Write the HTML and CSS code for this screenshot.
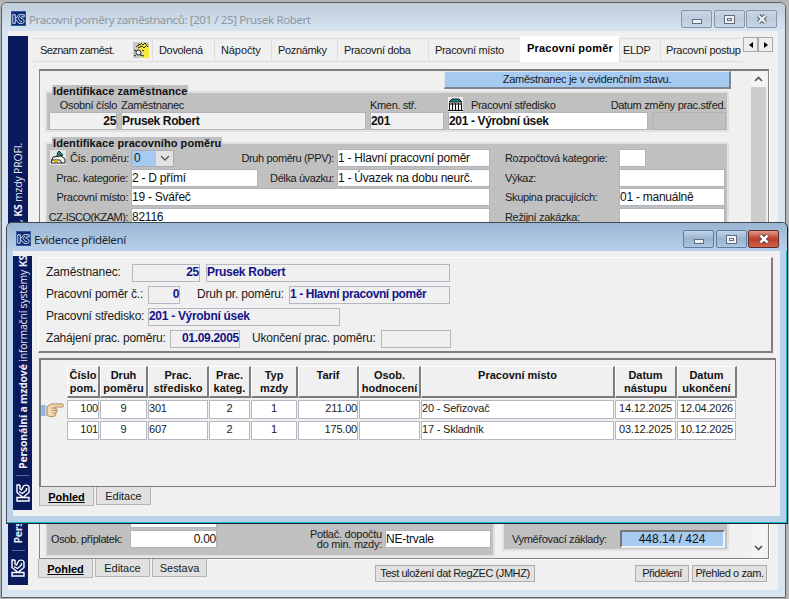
FILE: index.html
```html
<!DOCTYPE html>
<html lang="cs">
<head>
    <meta charset="utf-8">
    <title>Pracovní poměry zaměstnanců</title>
    <link rel="stylesheet" href="styles.css">
</head>
<body>
    <svg class="defs" width="0" height="0">
        <symbol id="logo" viewBox="0 0 18 14">
            <path d="M1 1h3.500v12H1zM5 6.500L9.500 1H17v3M5 7.500L9.500 13H15c2.500-1 2.500-5 0-6l-3-1.500 1-1.500h4M10.500 3L8.500 6.500 12 10.500h2" fill="none" stroke="currentColor" stroke-width="1.400"/>
        </symbol>
    </svg>

    <!-- main window -->
    <div class="window main-window">
        <div class="titlebar">
            <span class="app-icon"><svg width="13" height="10"><use href="#logo"/></svg></span>
            <span class="title">Pracovní poměry zaměstnanců: [201 / 25] Prusek Robert</span>
            <span class="win-btn"><i class="min"></i></span>
            <span class="win-btn"><i class="max"></i></span>
            <span class="win-btn"><svg width="12" height="10" viewBox="0 0 12 10"><path d="M2.500 1.500l7 7M9.500 1.500l-7 7" stroke="#5d6672" stroke-width="4.500"/><path d="M2.500 1.500l7 7M9.500 1.500l-7 7" stroke="#eef2f7" stroke-width="2.200"/></svg></span>
        </div>
        <div class="client">
            <div class="sidebar">
                <span class="side-text side-top">systémy, <b>KS</b> mzdy PROFI.</span>
                <span class="side-text"><b>Personální a mzdové</b></span>
                <i class="side-line"></i>
                <svg class="side-logo" width="18" height="14"><use href="#logo"/></svg>
            </div>
            <div class="content">
                <div class="tabs">
                    <span class="tab t-list">Seznam zaměst.
                        <svg width="16" height="16" viewBox="0 0 16 16"><path d="M0 0h16v16H0z" fill="#c8c8c8"/><path d="M3 5l5-4 5 0 3 4v11H8L10 10 6 8z" fill="#f4ec3a"/><path d="M3 5l3-2M5 2l3 1M8 1l2 2 2-2 3 4M5 6l4-2 2 2 2-2M9 8l2 1" stroke="#222" fill="none"/><circle cx="5.500" cy="10.500" r="2.500" fill="#eee" stroke="#222"/><path d="M1 8l2 1M1 13l2 1M7 13l4 1" stroke="#222"/></svg>
                    </span>
                    <span class="tab t-dov">Dovolená</span>
                    <span class="tab t-nap">Nápočty</span>
                    <span class="tab t-poz">Poznámky</span>
                    <span class="tab t-doba">Pracovní doba</span>
                    <span class="tab t-misto">Pracovní místo</span>
                    <span class="tab active">Pracovní poměr</span>
                    <span class="tab t-eldp">ELDP</span>
                    <span class="tab t-post">Pracovní postup</span>
                    <span class="tab-arrows">
                        <i><svg width="4" height="6"><path d="M4 0v6L0 3z"/></svg></i><i><svg width="4" height="6"><path d="M0 0v6l4-3z"/></svg></i>
                    </span>
                </div>

                <div class="panel">
                    <div class="form">
                        <div class="status">Zaměstnanec je v evidenčním stavu.</div>

                        <div class="group employee">
                            <div class="legend">Identifikace zaměstnance</div>
                            <div class="emp-grid emp-labels">
                                <span class="right">Osobní číslo</span>
                                <span>Zaměstnanec</span>
                                <span>Kmen. stř.</span>
                                <span class="with-icon"><svg width="15" height="15" viewBox="0 0 15 15"><path d="M0 0h15v15H0z" fill="#eee"/><path d="M1 5l3-3h7l3 3z" fill="#159090" stroke="#111"/><path d="M1.500 6v7M4.500 6v7M7.500 6v7M10.500 6v7M13.500 6v7M0 13.500h15M1 7h13" stroke="#111"/></svg>Pracovní středisko</span>
                                <span class="right nowrap-left">Datum změny prac.střed.</span>
                            </div>
                            <div class="emp-grid">
                                <span class="field light strong right">25</span>
                                <span class="field light strong">Prusek Robert</span>
                                <span class="field light strong">201</span>
                                <span class="field strong">201 - Výrobní úsek</span>
                                <span class="field gray"></span>
                            </div>
                        </div>

                        <div class="group relation">
                            <div class="legend">Identifikace pracovního poměru</div>
                            <div class="row">
                                <label class="first with-icon"><svg width="16" height="15" viewBox="0 0 16 15"><path d="M0 0h16v15H0z" fill="#e4e4e4"/><path d="M9 1l4 4-2 1-4-2zM8 5L5 7" fill="#1d8f8f" stroke="#123"/><path d="M3 7l8-1 4 3v4H1z" fill="#f5f5ea" stroke="#222"/><path d="M1 10h9l2 3" fill="none" stroke="#222"/><path d="M4 11h4" stroke="#c9b800" stroke-width="2"/></svg>Čís. poměru:</label>
                                <span class="combo"><span>0</span><i><svg width="10" height="6"><path d="M1 1l4 4 4-4" fill="none" stroke="#555" stroke-width="1.300"/></svg></i></span>
                                <label class="wide">Druh poměru (PPV):</label>
                                <span class="field w153">1 - Hlavní pracovní poměr</span>
                                <label class="third">Rozpočtová kategorie:</label>
                                <span class="field w27"></span>
                            </div>
                            <div class="row">
                                <label class="first">Prac. kategorie:</label>
                                <span class="field w127">2 - D přímí</span>
                                <label class="mid">Délka úvazku:</label>
                                <span class="field w153">1 - Úvazek na dobu neurč.</span>
                                <label class="third">Výkaz:</label>
                                <span class="field w105"></span>
                            </div>
                            <div class="row">
                                <label class="first">Pracovní místo:</label>
                                <span class="field w359">19 - Svářeč</span>
                                <label class="third">Skupina pracujících:</label>
                                <span class="field w105">01 - manuálně</span>
                            </div>
                            <div class="row">
                                <label class="first tight">CZ-ISCO(KZAM):</label>
                                <span class="field w359">82116</span>
                                <label class="third">Režijní zakázka:</label>
                                <span class="field w105"></span>
                            </div>
                        </div>

                        <div class="bottom-groups">
                            <div class="group pay">
                                <div class="row"><label class="first"></label><span class="field w87"></span></div>
                                <div class="row">
                                    <label class="bonus">Osob. příplatek:</label>
                                    <span class="field w87 right">0.00</span>
                                    <label class="two-line"><span>Potlač. dopočtu</span><span>do min. mzdy:</span></label>
                                    <span class="field w105">NE-trvale</span>
                                </div>
                            </div>
                            <div class="group bases">
                                <div class="row">
                                    <label>Vyměřovací základy:</label>
                                    <span class="field blue">448.14 / 424</span>
                                </div>
                            </div>
                        </div>
                    </div>
                    <div class="scrollbar">
                        <svg width="9" height="6"><path d="M1 5l3.500-3.500L8 5" fill="none" stroke="#555" stroke-width="1.700"/></svg>
                        <i></i>
                        <svg width="9" height="6"><path d="M1 1l3.500 3.500L8 1" fill="none" stroke="#555" stroke-width="1.700"/></svg>
                    </div>
                </div>

                <div class="footer">
                    <span class="page-tab current">Pohled</span>
                    <span class="page-tab">Editace</span>
                    <span class="page-tab">Sestava</span>
                    <button class="btn btn-test">Test uložení dat RegZEC (JMHZ)</button>
                    <button class="btn btn-assign">Přidělení</button>
                    <button class="btn btn-list">Přehled o zam.</button>
                </div>
            </div>
        </div>
    </div>

    <!-- assignment dialog -->
    <div class="window dialog">
        <div class="titlebar">
            <span class="app-icon"><svg width="13" height="10"><use href="#logo"/></svg></span>
            <span class="title">Evidence přidělení</span>
            <span class="win-btn"><i class="min"></i></span>
            <span class="win-btn"><i class="max"></i></span>
            <span class="win-btn close"><svg width="12" height="10" viewBox="0 0 12 10"><path d="M2.500 1.500l7 7M9.500 1.500l-7 7" stroke="#5a3030" stroke-width="4.500"/><path d="M2.500 1.500l7 7M9.500 1.500l-7 7" stroke="#fff" stroke-width="2.600"/></svg></span>
        </div>
        <div class="client">
            <div class="sidebar">
                <span class="side-text"><b>Personální a mzdové</b> informační systémy <b>KS</b></span>
                <i class="side-line"></i>
                <svg class="side-logo" width="18" height="14"><use href="#logo"/></svg>
            </div>
            <div class="content">
                <div class="info">
                    <div class="info-row">
                        <label class="l1">Zaměstnanec:</label><span class="value v68 right">25</span><span class="value v244 next">Prusek Robert</span>
                    </div>
                    <div class="info-row">
                        <label class="l2">Pracovní poměr č.:</label><span class="value v32 right">0</span><label class="l-type">Druh pr. poměru:</label><span class="value v161">1 - Hlavní pracovní poměr</span>
                    </div>
                    <div class="info-row">
                        <label class="l2">Pracovní středisko:</label><span class="value v192">201 - Výrobní úsek</span>
                    </div>
                    <div class="info-row">
                        <label class="l3">Zahájení prac. poměru:</label><span class="value v70 right">01.09.2005</span><label class="l-end">Ukončení prac. poměru:</label><span class="value v70"></span>
                    </div>
                </div>

                <div class="list">
                    <div class="list-row head">
                        <span>Číslo<br>pom.</span><span>Druh<br>poměru</span><span>Prac.<br>středisko</span><span>Prac.<br>kateg.</span><span>Typ<br>mzdy</span><span>Tarif</span><span>Osob.<br>hodnocení</span><span>Pracovní místo</span><span>Datum<br>nástupu</span><span>Datum<br>ukončení</span>
                    </div>
                    <div class="list-row data">
                        <svg class="hand" width="23" height="16" viewBox="0 0 23 16"><path d="M0 3h4v11H0z" fill="#8fb8e8"/><path d="M4 4h2v9H4z" fill="#f7f7f7" stroke="#999" stroke-width=".6"/><path d="M6 5l4-3h11c2 0 2 3 0 3h-7v2h2v2.500h-1v2.500h-1v2c-3 1-6 1-8-1z" fill="#f3d9ae" stroke="#a5804c" stroke-width=".9"/><path d="M10 6h4M11 8.500h4M11 11h3" stroke="#a5804c" stroke-width=".8"/></svg>
                        <span class="right">100</span><span>9</span><span class="left">301</span><span>2</span><span>1</span><span class="right">211.00</span><span></span><span class="left">20 - Seřizovač</span><span>14.12.2025</span><span>12.04.2026</span>
                    </div>
                    <div class="list-row data">
                        <span class="right">101</span><span>9</span><span class="left">607</span><span>2</span><span>1</span><span class="right">175.00</span><span></span><span class="left">17 - Skladník</span><span>03.12.2025</span><span>10.12.2025</span>
                    </div>
                </div>

                <div class="footer">
                    <span class="page-tab current">Pohled</span>
                    <span class="page-tab">Editace</span>
                </div>
            </div>
        </div>
    </div>
</body>
</html>
```
FILE: styles.css
```css
* {
    box-sizing: border-box;
}
body {
    margin: 0;
    width: 789px;
    height: 599px;
    overflow: hidden;
    position: relative;
    background: #b4b4b4;
    font-family: "Liberation Sans", Arial, sans-serif;
    font-size: 11px;
    letter-spacing: -0.33px;
    color: #1a1a1a;
    white-space: nowrap;
}
svg {
    display: block;
    flex: none;
}
.defs {
    position: absolute;
}

/* windows */
.window {
    position: absolute;
    border: 1px solid #5a5f66;
    border-radius: 6px 6px 0 0;
    overflow: hidden;
}
.main-window {
    left: 1px;
    top: 2px;
    width: 785px;
    height: 596px;
    background: #d7e4f2;
}
.dialog {
    left: 6px;
    top: 222px;
    width: 782px;
    height: 302px;
    background: #b9d1ea;
    border-color: #454b52 #16262c #16262c #454b52;
    box-shadow: inset -1px -1px 0 #22b4c4;
}
.titlebar {
    display: flex;
    height: 28px;
    padding: 7px 8px 0 9px;
    background: linear-gradient(#bfcddb, #d7e4f2);
}
.dialog .titlebar {
    background: linear-gradient(#9ab6d3, #b9d1ea);
}
.app-icon {
    display: flex;
    align-items: center;
    justify-content: center;
    width: 15px;
    height: 15px;
    margin-top: 1px;
    border: 1px solid #35589c;
    background: #0d2c73;
    color: #cfdcf4;
}
.title {
    flex: 1;
    margin-left: 3px;
    font: 11.5px/19px "Noto Sans", "Open Sans", sans-serif;
    letter-spacing: -0.39px;
    color: #8e979f;
}
.dialog .title {
    color: #1c2630;
}
.win-btn {
    display: flex;
    align-items: center;
    justify-content: center;
    width: 31px;
    height: 18px;
    margin-left: 1.5px;
    border: 1px solid #8795a6;
    border-radius: 2px;
    background: linear-gradient(#cad7e4, #bccbdc 50%, #c9d8e8);
}
.dialog .win-btn {
    border-color: #627c9b;
    background: linear-gradient(#bfd3e8, #9ab4d0 50%, #acc6e0);
}
.dialog .win-btn.close {
    border-color: #5e2c2c;
    background: linear-gradient(#dc9b8e, #bd3f2c 50%, #cf6249);
}
.win-btn i {
    border: 1px solid #636c78;
    background: #eef1f5;
}
.min {
    width: 10px;
    height: 5px;
    margin-top: 4px;
}
.max {
    width: 11px;
    height: 9px;
    box-shadow: inset 0 0 0 2px #eef1f5, inset 0 0 0 3px #636c78;
}
.client {
    display: flex;
    width: 770px;
    height: 559px;
    margin-left: 6px;
    background: #f0f0f0;
}
.dialog .client {
    width: 767px;
    height: 265px;
}

/* vertical brand strip */
.sidebar {
    flex: none;
    display: flex;
    flex-direction: column;
    align-items: center;
    justify-content: flex-end;
    width: 20px;
    height: 549px;
    margin-top: 5px;
    padding-bottom: 8px;
    overflow: hidden;
    background: #0a1a5c;
    color: #fff;
}
.dialog .sidebar {
    width: 19px;
    height: 254px;
}
.side-text {
    flex: none;
    writing-mode: vertical-rl;
    transform: rotate(180deg);
    font: 10.5px/16px "Open Sans", "Noto Sans", sans-serif;
    letter-spacing: -0.2px;
    color: #e8edf8;
}
.side-top {
    margin: 107px 0 auto;
}
.side-line {
    flex: none;
    width: 13px;
    height: 1px;
    margin: 6px 0 8px;
    background: #5a6698;
}
.side-logo {
    transform: rotate(-90deg);
    margin: 2px 0;
}

/* main content */
.content {
    flex: 1;
    min-width: 0;
}
.main-window .content {
    padding: 7px 0 0 5px;
}
.tabs {
    display: flex;
    align-items: flex-start;
    height: 24px;
}
.tab {
    flex: none;
    display: flex;
    align-items: center;
    justify-content: space-between;
    height: 24px;
    padding: 0 3px 1px 6px;
    border: solid #dcdcdc;
    border-width: 1px 0 1px 1px;
}
.t-list { width: 119px; padding-left: 7px; border-left: 0; letter-spacing: -0.55px; }
.t-dov { width: 62px; }
.t-nap { width: 57px; letter-spacing: -0.1px; }
.t-poz { width: 66px; }
.t-doba { width: 91px; }
.t-misto { width: 92px; }
.t-eldp { width: 41px; padding-left: 3px; }
.t-post { width: 82px; padding-left: 5px; }
.tab.active {
    width: 99px;
    height: 26px;
    margin-top: -2px;
    padding: 0 0 2px 7px;
    border: 0;
    background: #fff;
    color: #000;
    font-weight: bold;
    letter-spacing: 0.2px;
}
.tab-arrows {
    display: flex;
    width: 30px;
    margin-left: 1px;
}
.tab-arrows i {
    display: flex;
    align-items: center;
    justify-content: center;
    width: 15px;
    height: 15px;
    margin-top: -1px;
    border: 1px solid #a9a9a9;
    background: #eee;
}
.panel {
    display: flex;
    width: 730px;
    height: 490px;
    margin: 7px 0 0 6px;
    border: 1px solid #858585;
    border-top: 2px solid #7c7c7c;
    box-shadow: 1px 1px 0 #fff;
}
.form {
    width: 711px;
}
.status {
    width: 287px;
    height: 18px;
    margin-left: 404px;
    border: 1px solid #e4e9f0;
    border-right: 2px solid #7b8795;
    border-bottom: 2px solid #7b8795;
    background: #a6caf0;
    line-height: 15px;
    text-align: center;
    letter-spacing: -0.3px;
}
.group {
    width: 684px;
    margin-left: 5px;
    border: 2px solid #e1e1e1;
    background: #c0c0c0;
}
.employee {
    height: 41px;
    margin-top: 2px;
}
.relation {
    height: 350px;
    margin-top: 10px;
}
.legend {
    width: max-content;
    height: 13px;
    margin: -8px 0 0 5px;
    padding: 0 1px;
    background: #c0c0c0;
    font-weight: bold;
    line-height: 13px;
    letter-spacing: 0.07px;
    color: #111;
}
.relation .legend {
    margin: -7px 0 -1px 5px;
}
.emp-grid {
    display: grid;
    grid-template-columns: 68px 245px 74px 200px 74px;
    column-gap: 4px;
    padding-left: 2px;
}
.emp-labels {
    height: 14px;
    line-height: 14px;
}
.right {
    text-align: right;
}
.with-icon {
    display: flex;
    gap: 8px;
}
.with-icon svg {
    margin-top: -1px;
}
.nowrap-left {
    display: flex;
    justify-content: flex-end;
}
.field {
    flex: none;
    height: 18px;
    padding: 0 1px 0 0;
    border: 1px solid #b2b4bc;
    background: #fff;
    font-size: 12px;
    letter-spacing: -0.25px;
    line-height: 17px;
    color: #111;
}
.field.right {
    padding: 0;
}
.field.light {
    background: #f0f0f0;
}
.field.gray {
    background: #c0c0c0;
}
.field.strong {
    font-weight: bold;
    letter-spacing: -0.36px;
}
.row {
    display: flex;
    align-items: center;
    height: 18px;
    margin-bottom: 1.7px;
}
.row .first {
    width: 84px;
    padding-right: 3px;
    text-align: right;
}
.row .tight {
    letter-spacing: -0.5px;
}
.row .first.with-icon {
    gap: 4px;
    padding: 0 0 0 3px;
    align-items: center;
}
.combo {
    display: flex;
    width: 43px;
    height: 17px;
    border: 1px solid #aab;
    background: #a6caf0;
    font-size: 12px;
    line-height: 15px;
}
.combo span {
    width: 25px;
    padding-left: 2px;
}
.combo i {
    display: flex;
    align-items: center;
    justify-content: center;
    width: 17px;
    background: #e3e3e3;
}
.row .wide, .row .mid {
    width: 163px;
    padding-right: 3px;
    text-align: right;
    letter-spacing: -0.4px;
}
.row .mid {
    width: 79px;
}
.row .third {
    width: 129px;
    padding-left: 15px;
}
.w27 { width: 27px; }
.w87 { width: 87px; }
.w105 { width: 106px; }
.w127 { width: 127px; }
.w153 { width: 153px; }
.w359 { width: 359px; }
.bottom-groups {
    display: flex;
    gap: 7px;
    margin-top: 8px;
}
.pay {
    width: 450px;
    height: 57px;
    padding-top: 8px;
}
.pay .first {
    width: 83px;
}
.pay .bonus {
    width: 83px;
    padding-left: 4px;
    letter-spacing: -0.4px;
}
.two-line {
    display: flex;
    flex-direction: column;
    align-items: flex-end;
    width: 168px;
    padding-right: 3px;
    line-height: 10px;
    letter-spacing: -0.25px;
}
.bases {
    width: 227px;
    height: 51px;
    margin-left: 0;
    padding-top: 28px;
}
.bases label {
    width: 116px;
    padding-left: 8px;
}
.field.blue {
    width: 105px;
    border-width: 2px;
    border-color: #777 #f2f2f2 #f2f2f2 #777;
    background: #a6caf0;
    line-height: 14px;
    letter-spacing: 0;
    text-align: center;
}
.scrollbar {
    display: flex;
    flex-direction: column;
    align-items: center;
    width: 15px;
    padding: 5px 0 7px;
    background: #f4f4f4;
}
.scrollbar i {
    width: 15px;
    height: 380px;
    margin: 5px 0 auto;
    background: #cdcdcd;
}
.footer {
    display: flex;
    align-items: flex-start;
    padding-left: 5px;
}
.page-tab {
    width: 55px;
    height: 18px;
    margin-right: 2px;
    border: 1px solid #b5b5b5;
    border-top: 0;
    background: #e1e1e1;
    line-height: 18px;
    text-align: center;
    letter-spacing: -0.05px;
}
.page-tab.current {
    height: 19px;
    line-height: 20px;
    font-weight: bold;
    text-decoration: underline;
    color: #000;
}
.btn {
    height: 17px;
    margin-top: 6px;
    padding: 0;
    border: 1px solid #adadad;
    background: #e1e1e1;
    color: #1a1a1a;
    font: 11px/15px "Liberation Sans", Arial, sans-serif;
    letter-spacing: -0.42px;
}
.btn-test {
    width: 160px;
    margin-left: 166px;
}
.btn-assign {
    width: 54px;
    margin-left: 100px;
}
.btn-list {
    width: 75px;
    margin-left: 3px;
}

/* dialog */
.info {
    width: 735px;
    height: 96px;
    margin: 6px 0 0 6px;
    padding: 6px 0 0 7px;
    border: 1px solid #fff;
    border-right: 2px solid #7d7d7d;
    border-bottom: 2px solid #7d7d7d;
}
.info-row {
    display: flex;
    align-items: center;
    height: 18px;
    margin-bottom: 4px;
    font-size: 12px;
    line-height: 16px;
}
.info-row label {
    height: 18px;
    letter-spacing: -0.2px;
}
.info-row .l1 { width: 86px; letter-spacing: -0.1px; }
.l2 { width: 102px; }
.l3 { width: 124px; }
.l-type { width: 109px; padding-left: 17px; }
.l-end { width: 141px; padding-left: 12px; }
.value {
    height: 18px;
    border: 1px solid #b4b6c0;
    font-weight: bold;
    line-height: 15px;
    letter-spacing: -0.3px;
    color: #14148a;
}
.next { margin-left: 6px; }
.v32 { width: 32px; }
.v68 { width: 68px; }
.v70 { width: 70px; }
.v161 { width: 161px; letter-spacing: -0.42px; }
.v192 { width: 192px; }
.v244 { width: 244px; }
.list {
    width: 737px;
    height: 129px;
    margin: 5px 0 0 7px;
    padding: 6px 0 0 26px;
    border: 2px solid #7d7d7d;
    border-width: 2px 1px 1px 2px;
}
.list-row {
    position: relative;
    display: grid;
    grid-template-columns: 33px 48px 61px 42px 47px 61px 62px 194px 62px 60px;
}
.head {
    height: 32px;
    margin-bottom: 2px;
    font-weight: bold;
    line-height: 13px;
    letter-spacing: 0;
    text-align: center;
    color: #111;
}
.head span {
    padding-top: 2px;
    border: 1px solid #fff;
    border-right: 2px solid #7d7d7d;
    border-bottom: 2px solid #7d7d7d;
}
.data {
    height: 19px;
    margin-bottom: 2px;
    line-height: 14px;
    letter-spacing: -0.2px;
    text-align: center;
}
.data span {
    margin-right: 1px;
    border: 1px solid #b4b6c0;
    background: #fff;
}
.data .left {
    text-align: left;
}
.data .right {
    text-align: right;
}
.hand {
    position: absolute;
    left: -26px;
    top: 2px;
}
.dialog .footer {
    padding-left: 7px;
}
```
